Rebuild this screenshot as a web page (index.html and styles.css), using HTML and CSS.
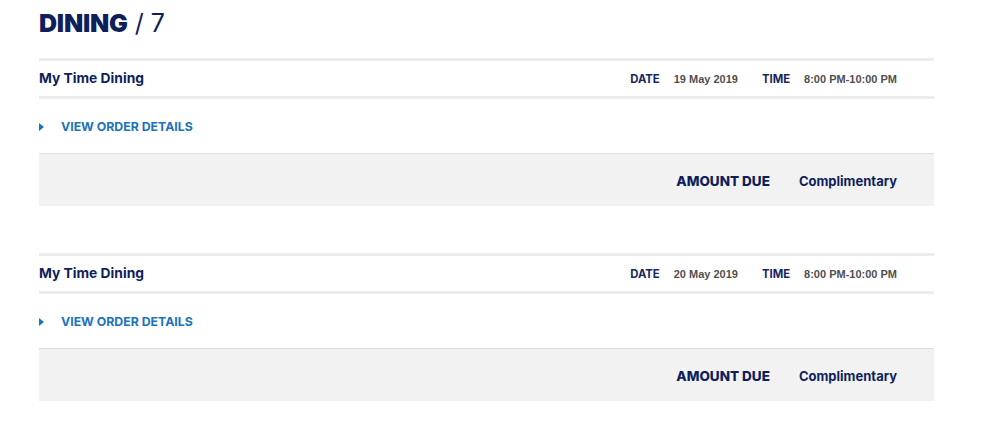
FILE: index.html
```html
<!DOCTYPE html>
<html>
<head>
<meta charset="utf-8">
<link rel="stylesheet" href="styles.css">
</head>
<body>
<div class="page">
  <h1 class="title"><span class="title-main">DINING</span> / 7</h1>

  <section class="order">
    <div class="order-head">
      <div class="order-name">My Time Dining</div>
      <div class="order-meta">
        <span class="meta-label">DATE</span>
        <span class="meta-value">19 May 2019</span>
        <span class="meta-label time-label">TIME</span>
        <span class="meta-value">8:00 PM-10:00 PM</span>
      </div>
    </div>
    <div class="order-link">
      <span class="caret"></span>
      <span class="link-text">VIEW ORDER DETAILS</span>
    </div>
    <div class="order-total">
      <span class="total-label">AMOUNT DUE</span>
      <span class="total-value">Complimentary</span>
    </div>
  </section>

  <section class="order">
    <div class="order-head">
      <div class="order-name">My Time Dining</div>
      <div class="order-meta">
        <span class="meta-label">DATE</span>
        <span class="meta-value">20 May 2019</span>
        <span class="meta-label time-label">TIME</span>
        <span class="meta-value">8:00 PM-10:00 PM</span>
      </div>
    </div>
    <div class="order-link">
      <span class="caret"></span>
      <span class="link-text">VIEW ORDER DETAILS</span>
    </div>
    <div class="order-total">
      <span class="total-label">AMOUNT DUE</span>
      <span class="total-value">Complimentary</span>
    </div>
  </section>
</div>
</body>
</html>
```

FILE: styles.css
```css
html, body {
  margin: 0;
  padding: 0;
  background: #ffffff;
}

body {
  font-family: Inter, Lato, Arial, sans-serif;
  color: #0f1f5a;
}

.page {
  width: 895px;
  padding-left: 39px;
  padding-top: 8px;
}

.title {
  margin: 0;
  height: 50px;
  font-size: 25px;
  line-height: 30px;
  font-weight: 400;
  color: #0f1f5a;
}

.title-main {
  font-weight: 900;
  letter-spacing: -0.2px;
}

.order {
  margin-bottom: 47px;
}

.order-head {
  display: flex;
  align-items: center;
  justify-content: space-between;
  height: 35px;
  border-top: 3px solid #ececec;
  border-bottom: 3px solid #ececec;
}

.order-name {
  font-size: 13.8px;
  font-weight: 700;
  color: #0f1f5a;
  padding-bottom: 1px;
}

.order-meta {
  display: flex;
  align-items: center;
  padding-right: 37px;
  font-family: "Liberation Sans", Arial, sans-serif;
  font-weight: 700;
}

.meta-label {
  font-family: Inter, Arial, sans-serif;
  font-size: 11.3px;
  font-weight: 700;
  color: #16275f;
  margin-right: 14px;
}

.time-label {
  margin-left: 24px;
}

.meta-value {
  font-size: 11px;
  color: #4f4f4f;
}

.order-link {
  display: flex;
  align-items: center;
  height: 54px;
  padding-top: 1px;
  box-sizing: border-box;
}

.caret {
  width: 0;
  height: 0;
  border-top: 4px solid transparent;
  border-bottom: 4px solid transparent;
  border-left: 5px solid #1b74bb;
  margin-right: 17px;
}

.link-text {
  font-size: 12.3px;
  font-weight: 700;
  color: #1b74bb;
}

.order-total {
  display: flex;
  align-items: center;
  justify-content: flex-end;
  height: 53px;
  background: #f2f2f2;
  border-top: 1px solid #dedede;
  padding-right: 37px;
  padding-top: 1px;
  box-sizing: border-box;
}

.total-label {
  font-size: 13.5px;
  font-weight: 800;
  color: #0f1f5a;
  margin-right: 29px;
}

.total-value {
  font-size: 13px;
  font-weight: 700;
  color: #0f1f5a;
}
```
